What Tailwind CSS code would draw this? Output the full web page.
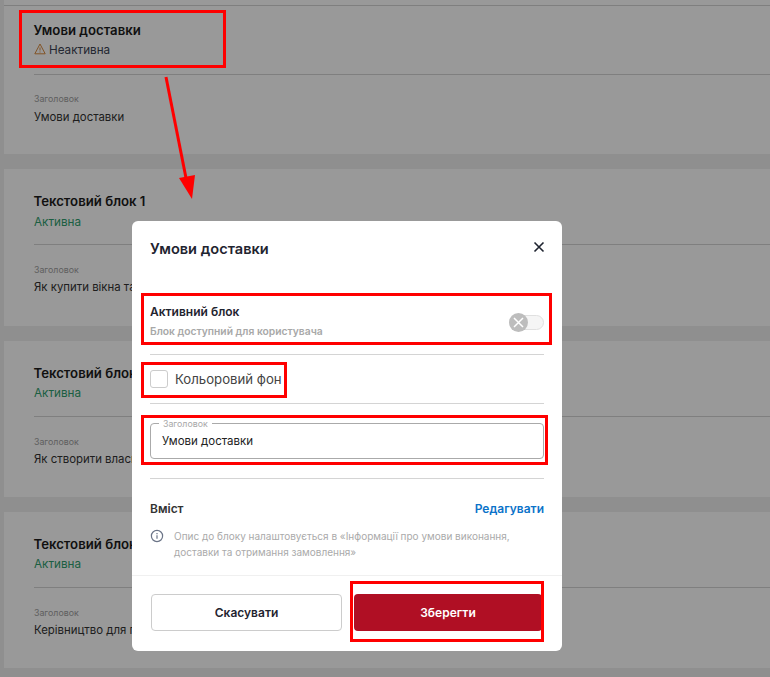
<!DOCTYPE html>
<html lang="uk">

<head>
  <meta charset="UTF-8">
  <meta name="viewport" content="width=device-width, initial-scale=1.0">
  <title>Умови доставки</title>
  <script src="https://cdn.jsdelivr.net/npm/@tailwindcss/browser@4"></script>
</head>

<body class="relative h-[677px] w-[770px] overflow-hidden bg-[#eeeeee] font-['Inter','Noto_Sans',sans-serif]">
  <!-- page behind the dialog -->
  <main class="flex flex-col gap-[15px] pl-[4px]">
    <section class="h-[154px] bg-white pl-[30px]">
      <div class="-ml-[30px] h-[6px] border-b border-[#d4d4d4]"></div>
      <div class="flex h-[69px] flex-col border-b border-[#d4d4d4] pt-[14px]">
        <h2 class="-ml-[0.5px] text-[13.2px]/[20px] font-semibold text-[#1c1c1c]">Умови доставки</h2>
        <p class="flex items-center gap-[3px] pt-[1px] text-[11.7px]/[19px] text-[#3c4354]">
          <svg class="h-[12px] w-[12px] -translate-y-[2px]" viewBox="0 0 12 12" fill="none" stroke="#d98b3f" stroke-width="1"><path d="M6 1 11.2 10.8H.8Z" stroke-linejoin="round"/><path d="M6 4.5v3M6 8.5v1"/></svg>
          Неактивна
        </p>
      </div>
      <p class="mt-[17px] text-[8.8px]/[14px] text-[#a0a0a0]">Заголовок</p>
      <p class="mt-[1px] text-[11.4px]/[20px] text-[#333333]">Умови доставки</p>
    </section>

    <section class="h-[157px] bg-white pl-[30px] pt-[22px]">
      <div class="h-[54px] border-b border-[#d4d4d4]">
        <h2 class="-ml-[0.5px] text-[13.2px]/[20px] font-semibold text-[#1c1c1c]">Текстовий блок 1</h2>
        <p class="pt-[1px] text-[11.7px]/[20px] text-[#2f9e6e]">Активна</p>
      </div>
      <p class="mt-[18px] text-[8.8px]/[14px] text-[#a0a0a0]">Заголовок</p>
      <p class="text-[11.4px]/[20px] text-[#333333]">Як купити вікна та двері</p>
    </section>

    <section class="h-[156px] bg-white pl-[30px] pt-[22px]">
      <div class="h-[54px] border-b border-[#d4d4d4]">
        <h2 class="-ml-[0.5px] text-[13.2px]/[20px] font-semibold text-[#1c1c1c]">Текстовий блок 2</h2>
        <p class="text-[11.7px]/[20px] text-[#2f9e6e]">Активна</p>
      </div>
      <p class="mt-[18px] text-[8.8px]/[14px] text-[#a0a0a0]">Заголовок</p>
      <p class="text-[11.4px]/[20px] text-[#333333]">Як створити власний дизайн</p>
    </section>

    <section class="h-[156px] bg-white pl-[30px] pt-[22px]">
      <div class="h-[54px] border-b border-[#d4d4d4]">
        <h2 class="-ml-[0.5px] text-[13.2px]/[20px] font-semibold text-[#1c1c1c]">Текстовий блок 3</h2>
        <p class="text-[11.7px]/[20px] text-[#2f9e6e]">Активна</p>
      </div>
      <p class="mt-[18px] text-[8.8px]/[14px] text-[#a0a0a0]">Заголовок</p>
      <p class="text-[11.4px]/[20px] text-[#333333]">Керівництво для покупця</p>
    </section>
  </main>

  <div class="absolute inset-0 bg-black/40"></div>

  <!-- dialog -->
  <div class="absolute left-[132px] top-[221px] flex h-[430px] w-[430px] flex-col rounded-[6px] bg-white">
    <div class="flex items-start justify-between px-[18px] pt-[18px]">
      <h3 class="text-[14.6px]/[20px] font-semibold text-[#1f2430]">Умови доставки</h3>
      <svg class="mt-[2px] h-[12px] w-[12px] translate-x-[1px]" viewBox="0 0 12 12" fill="none" stroke="#1f2430" stroke-width="1.6"><path d="M1.5 1.5l9 9M10.5 1.5l-9 9"/></svg>
    </div>

    <div class="mx-[18px] mt-[43px] flex h-[53px] items-start justify-between border-b border-[#d4d4d4]">
      <div>
        <p class="text-[12px]/[20px] font-semibold text-[#1f2430]">Активний блок</p>
        <p class="text-[10.3px]/[18px] font-semibold text-[#a8a8a8]">Блок доступний для користувача</p>
      </div>
      <div class="relative mt-[13px] h-[15px] w-[35px] rounded-full border border-[#e0e0e0] bg-[#f5f5f5]">
        <span class="absolute left-[-1px] top-[-3px] flex h-[19px] w-[19px] items-center justify-center rounded-full bg-[#bdbdbd]">
          <svg class="h-[11px] w-[11px]" viewBox="0 0 11 11" fill="none" stroke="#ffffff" stroke-width="1.5"><path d="M1 1l9 9M10 1l-9 9"/></svg>
        </span>
      </div>
    </div>

    <div class="mx-[18px] flex h-[49px] items-center gap-[7px] border-b border-[#d4d4d4]">
      <span class="h-[18px] w-[18px] rounded-[3px] border border-[#cccccc] bg-white"></span>
      <span class="pt-[2px] text-[13.2px] text-[#444444]">Кольоровий фон</span>
    </div>

    <div class="relative mx-[18px] mt-[19px] flex h-[36px] items-center rounded-[4px] border border-[#aaaaaa] px-[11px] pt-[2px] text-[11.5px] text-[#222222]">
      <span class="absolute left-[8px] top-[-5px] bg-white px-[4px] text-[8.8px]/[10px] text-[#a8a8a8]">Заголовок</span>
      Умови доставки
    </div>

    <div class="mx-[18px] mt-[19px] border-t border-[#d4d4d4]"></div>

    <div class="mx-[18px] mt-[21px] flex items-center justify-between text-[12px]/[18px] font-semibold">
      <span class="text-[#333333]">Вміст</span>
      <a class="text-[#0b73c9]">Редагувати</a>
    </div>

    <div class="mx-[18px] mt-[10px] flex items-start gap-[10px]">
      <svg class="mt-[1px] h-[14px] w-[14px] shrink-0" viewBox="0 0 14 14" fill="none" stroke="#6b7487" stroke-width="1.2"><circle cx="7" cy="7" r="5.6"/><path d="M7 6.2v3.6M7 4v1.2"/></svg>
      <p class="text-[10px]/[16px] text-[#aaaaaa]">Опис до блоку налаштовується в «Інформації про умови виконання, доставки та отримання замовлення»</p>
    </div>

    <div class="mt-auto flex h-[76px] items-start gap-[12px] border-t border-[#f0f0f0] pl-[19px] pr-[20px] pt-[18px]">
      <button class="h-[37px] w-[191px] rounded-[4px] border border-[#cccccc] bg-white text-[12px] font-semibold text-[#1f2430]">Скасувати</button>
      <button class="h-[37px] w-[188px] rounded-[4px] bg-[#b00f24] text-[12px] font-semibold text-white">Зберегти</button>
    </div>
  </div>

  <!-- red annotations -->
  <div class="absolute left-[19px] top-[10px] h-[58px] w-[207px] border-[3px] border-[#ff0000]"></div>
  <div class="absolute left-[141px] top-[293px] h-[52px] w-[411px] border-[3px] border-[#ff0000]"></div>
  <div class="absolute left-[141px] top-[362px] h-[36px] w-[146px] border-[3px] border-[#ff0000]"></div>
  <div class="absolute left-[141px] top-[415px] h-[50px] w-[407px] border-[3px] border-[#ff0000]"></div>
  <div class="absolute left-[350px] top-[581px] h-[61px] w-[194px] border-[3px] border-[#ff0000]"></div>
  <svg class="absolute left-0 top-0 h-[677px] w-[770px]" viewBox="0 0 770 677" fill="none">
    <path d="M166 77 186 178" stroke="#ff0000" stroke-width="3"/>
    <path d="M192 199 179 178 195 175Z" fill="#ff0000"/>
  </svg>
</body>

</html>
